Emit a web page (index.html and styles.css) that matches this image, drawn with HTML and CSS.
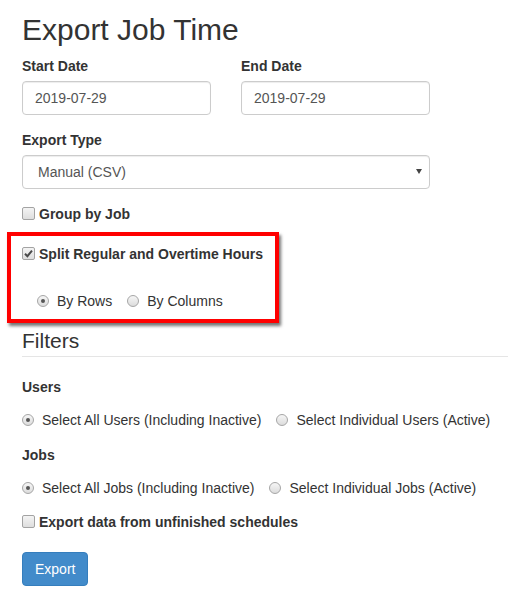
FILE: index.html
```html
<!DOCTYPE html>
<html>
<head>
<meta charset="utf-8">
<title>Export Job Time</title>
<link rel="stylesheet" href="styles.css">
</head>
<body>
<div class="page">
  <h2 class="title">Export Job Time</h2>
  <div class="top">
    <div class="row">
      <div class="form-group">
        <label class="control-label">Start Date</label>
        <input class="form-control" type="text" value="2019-07-29">
      </div>
      <div class="form-group">
        <label class="control-label">End Date</label>
        <input class="form-control" type="text" value="2019-07-29">
      </div>
    </div>
    <div class="form-group">
      <label class="control-label">Export Type</label>
      <div class="select-wrap">
        <select class="form-control select"><option>Manual (CSV)</option></select>
        <span class="caret"></span>
      </div>
    </div>
  </div>

  <label class="check"><span class="cb"></span>Group by Job</label>

  <div class="highlight">
    <label class="check"><span class="cb checked"><svg viewBox="0 0 13 13" width="13" height="13"><path d="M3 6.8 L5.4 9.2 L10 3.6" fill="none" stroke="#4a4a4a" stroke-width="2"/></svg></span>Split Regular and Overtime Hours</label>
    <div class="radios indent">
      <label class="radio"><span class="rd on"></span>By Rows</label>
      <label class="radio"><span class="rd"></span>By Columns</label>
    </div>
  </div>

  <div class="legend">Filters</div>

  <div class="section-label">Users</div>
  <div class="radios">
    <label class="radio"><span class="rd on"></span>Select All Users (Including Inactive)</label>
    <label class="radio"><span class="rd"></span>Select Individual Users (Active)</label>
  </div>

  <div class="section-label jobs">Jobs</div>
  <div class="radios">
    <label class="radio"><span class="rd on"></span>Select All Jobs (Including Inactive)</label>
    <label class="radio"><span class="rd"></span>Select Individual Jobs (Active)</label>
  </div>

  <label class="check unfinished"><span class="cb"></span>Export data from unfinished schedules</label>

  <button class="btn">Export</button>
</div>
</body>
</html>
```

FILE: styles.css
```css
html, body {
  margin: 0;
  padding: 0;
  background: #fff;
}
body {
  font-family: "Liberation Sans", Arial, sans-serif;
  font-size: 14px;
  line-height: 20px;
  color: #333;
}
.page {
  padding: 13px 4px 0 22px;
}
.title {
  margin: 0 0 10px;
  font-size: 30px;
  line-height: 33px;
  font-weight: 500;
  color: #333;
}
.top {
  width: 408px;
}
.row {
  display: grid;
  grid-template-columns: 189px 189px;
  column-gap: 30px;
}
.form-group {
  margin-bottom: 15px;
}
.control-label {
  display: block;
  font-weight: bold;
  margin-bottom: 5px;
}
.form-control {
  display: block;
  box-sizing: border-box;
  width: 100%;
  height: 34px;
  padding: 6px 12px;
  font-family: inherit;
  font-size: 14px;
  line-height: 20px;
  color: #555;
  background: #fff;
  border: 1px solid #ccc;
  border-radius: 4px;
  box-shadow: inset 0 1px 1px rgba(0,0,0,.075);
  margin: 0;
}
.select-wrap {
  position: relative;
}
.select {
  -webkit-appearance: none;
  appearance: none;
  padding-left: 15px;
}
.caret {
  position: absolute;
  right: 8px;
  top: 14px;
  width: 0;
  height: 0;
  border-left: 3px solid transparent;
  border-right: 3px solid transparent;
  border-top: 5px solid #444;
}
.check {
  display: flex;
  align-items: center;
  height: 20px;
  font-weight: bold;
  gap: 4px;
}
.cb {
  box-sizing: border-box;
  width: 13px;
  height: 13px;
  border: 1px solid #a3a3a3;
  border-radius: 2px;
  background: linear-gradient(#f4f4f4, #dedede);
  display: inline-flex;
  align-items: center;
  justify-content: center;
  flex: none;
  margin-top: -1px;
}
.cb svg {
  display: block;
  margin: -1px;
}
.highlight {
  box-sizing: border-box;
  width: 272px;
  height: 91px;
  margin: 8px 0 0 -15px;
  padding: 8px 0 0 11px;
  border: 4px solid #f00;
  box-shadow: 2px 3px 3px rgba(0,0,0,.55);
}
.radios {
  display: flex;
  align-items: center;
  gap: 15px;
  margin-top: 13px;
  height: 20px;
}
.indent {
  padding-left: 15px;
  margin-top: 27px;
}
.radio {
  display: flex;
  align-items: center;
  gap: 8px;
  color: #333;
  white-space: nowrap;
}
.rd {
  box-sizing: border-box;
  width: 12px;
  height: 12px;
  border-radius: 50%;
  border: 1px solid #a6a6a6;
  background: linear-gradient(#f6f6f6, #dcdcdc);
  display: inline-flex;
  align-items: center;
  justify-content: center;
  flex: none;
}
.rd.on::after {
  content: "";
  width: 4px;
  height: 4px;
  border-radius: 50%;
  background: #555;
}
.legend {
  margin-top: 3px;
  font-size: 21px;
  line-height: 30px;
  color: #333;
  border-bottom: 1px solid #e5e5e5;
  margin-bottom: 20px;
}
.section-label {
  font-weight: bold;
}
.section-label.jobs {
  margin-top: 15px;
}
.unfinished {
  margin-top: 14px;
}
.btn {
  display: block;
  margin-top: 20px;
  padding: 6px 12px;
  font-family: inherit;
  font-size: 14px;
  line-height: 20px;
  color: #fff;
  background: #428bca;
  border: 1px solid #357ebd;
  border-radius: 4px;
}
```
